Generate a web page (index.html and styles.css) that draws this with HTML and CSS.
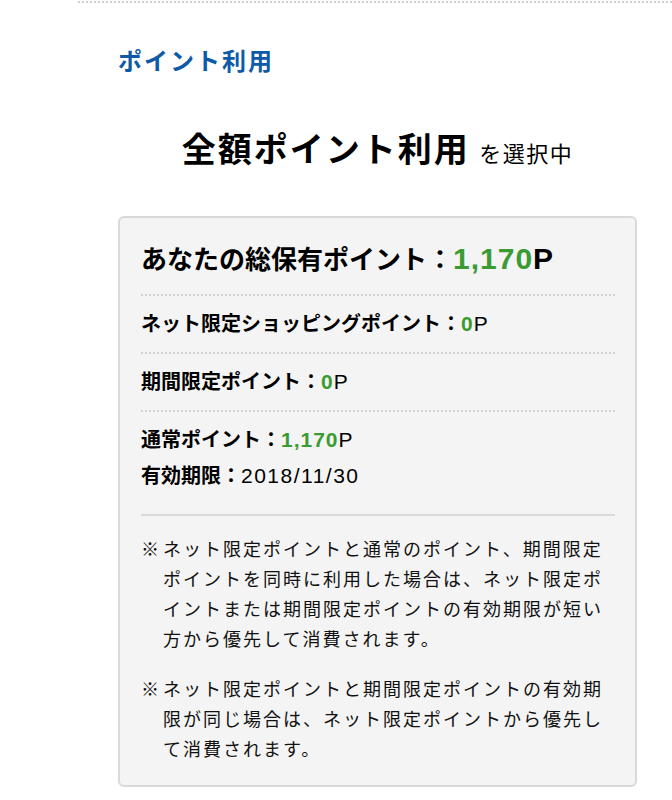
FILE: index.html
```html
<!DOCTYPE html>
<html lang="ja">
<head>
<meta charset="utf-8">
<title>ポイント利用</title>
<link rel="stylesheet" href="styles.css">
</head>
<body>
<div class="page">
  <h2 class="section-title">ポイント利用</h2>
  <p class="selected"><span class="selected-main">全額ポイント利用</span> <span class="selected-sub">を選択中</span></p>
  <div class="box">
    <div class="total">あなたの総保有ポイント：<span class="num-big">1,170</span><span class="unit-big">P</span></div>
    <div class="row">ネット限定ショッピングポイント：<span class="num">0</span><span class="unit">P</span></div>
    <div class="row">期間限定ポイント：<span class="num">0</span><span class="unit">P</span></div>
    <div class="row row-normal">
      <div>通常ポイント：<span class="num">1,170</span><span class="unit">P</span></div>
      <div>有効期限：<span class="date">2018/11/30</span></div>
    </div>
    <div class="notes">
      <div class="note"><span class="mark">※</span><span class="note-text">ネット限定ポイントと通常のポイント、期間限定ポイントを同時に利用した場合は、ネット限定ポイントまたは期間限定ポイントの有効期限が短い方から優先して消費されます。</span></div>
      <div class="note"><span class="mark">※</span><span class="note-text">ネット限定ポイントと期間限定ポイントの有効期限が同じ場合は、ネット限定ポイントから優先して消費されます。</span></div>
    </div>
  </div>
</div>
</body>
</html>
```
FILE: styles.css
```css
html, body {
  margin: 0;
  padding: 0;
  background: #fff;
}
body {
  font-family: "Liberation Sans", "Noto Sans CJK JP", sans-serif;
  color: #000;
}
.page {
  margin: 1px 0 0 78px;
  border-top: 2px dotted #cfcfcf;
  padding: 0 35px 0 40px;
}
.section-title {
  margin: 44px 0 0;
  font-size: 24px;
  line-height: 30px;
  letter-spacing: 2px;
  font-weight: bold;
  color: #0f5aa6;
}
.selected {
  margin: 49px 0 0;
  text-align: center;
  line-height: 48px;
  font-size: 34px;
}
.selected-main {
  font-weight: bold;
  letter-spacing: 2px;
  line-height: 1;
}
.selected-sub {
  font-size: 22px;
  letter-spacing: 1.5px;
  line-height: 1;
}
.box {
  margin-top: 42px;
  margin-bottom: 20px;
  border: 2px solid #d9d9d9;
  border-radius: 6px;
  background: #f4f4f4;
  padding: 0 20px 20px 21px;
}
.total {
  padding: 24px 0 16px;
  border-bottom: 2px dotted #d2d2d2;
  font-size: 26px;
  line-height: 36px;
  font-weight: bold;
}
.num-big {
  font-size: 30px;
  color: #3a9b32;
  letter-spacing: 1px;
  line-height: 1;
}
.unit-big {
  font-size: 30px;
  line-height: 1;
}
.row {
  padding: 14px 0;
  border-bottom: 2px dotted #d2d2d2;
  font-size: 20px;
  line-height: 28px;
  font-weight: bold;
}
.row-normal {
  padding: 10px 0 20px;
  line-height: 36px;
  border-bottom: 2px solid #d9d9d9;
}
.num {
  color: #3a9b32;
  font-weight: bold;
  font-size: 21px;
  letter-spacing: 1px;
  line-height: 1;
}
.unit {
  font-weight: normal;
  font-size: 21px;
  line-height: 1;
}
.date {
  font-weight: normal;
  font-size: 21px;
  letter-spacing: 1.5px;
  line-height: 1;
}
.notes {
  padding-top: 19px;
  display: flex;
  flex-direction: column;
  gap: 20px;
}
.note {
  display: flex;
  font-size: 18px;
  line-height: 30px;
  letter-spacing: 2px;
  color: #111;
}
.mark {
  flex: 0 0 22px;
  letter-spacing: 0;
}
.note-text {
  flex: 1;
}
```
